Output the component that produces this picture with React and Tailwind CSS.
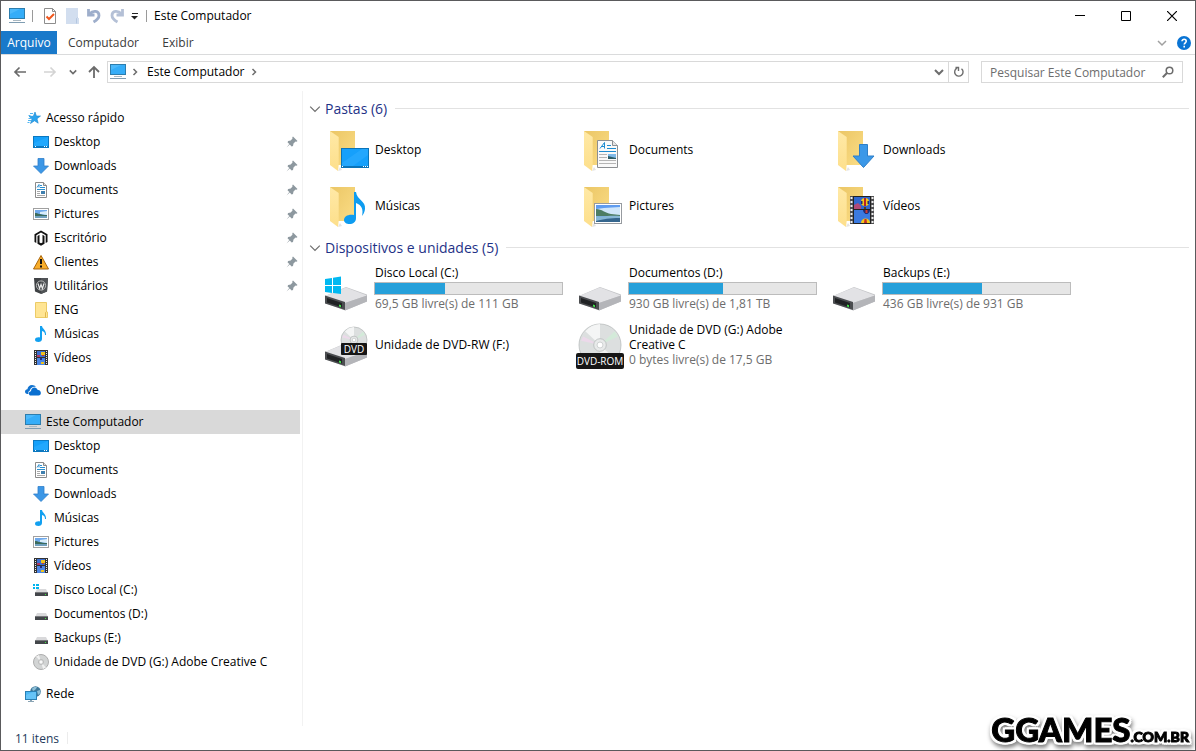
import React from 'react';

const MonitorIcon = () => (
    <svg width="16" height="16" viewBox="0 0 16 16" className="shrink-0">
        <rect x="0" y="0" width="16" height="11" fill="#2d7dad" />
        <rect x="1" y="1" width="14" height="9" fill="#4cb9fb" />
        <path d="M1 10V6L11 1h4v9z" fill="#35adf8" />
        <rect x="4" y="12" width="8" height="1" fill="#a9b8c2" />
        <rect x="0" y="14" width="16" height="1" fill="#7f9db2" />
    </svg>
);

const StarIcon = () => (
    <svg width="16" height="16" viewBox="0 0 16 16" className="shrink-0">
        <path d="M10 2l1.400 4H15.500l-3.500 2.800 1.200 4.400L9.500 10.800 5.500 13.500 7 9 4 6.300h4.300z" fill="#2ba4ee" stroke="#1c86cf" strokeWidth="0.6" />
        <path d="M5 3.500h3M3.500 5.500h2M3.500 8.500h3M3 10.500h3M2.500 12.500h2" stroke="#4fb4f1" strokeWidth="1" />
    </svg>
);

const DesktopIcon = () => (
    <svg width="16" height="16" viewBox="0 0 16 16" className="shrink-0">
        <rect x="0" y="2" width="16" height="12" fill="#0b78c0" />
        <rect x="1" y="3" width="14" height="9" fill="#14a0fa" />
        <path d="M1 12V9l14-6v9z" fill="#29adff" opacity="0.6" />
        <path d="M2 12.500h1M11 12.500h1M13 12.500h1" stroke="#fff" strokeWidth="1" />
    </svg>
);

const DownloadIcon = () => (
    <svg width="16" height="16" viewBox="0 0 16 16" className="shrink-0">
        <path d="M5 .5h6V8h4.500L8 15.500.5 8H5z" fill="#3c97e6" stroke="#2f7fca" strokeWidth="0.8" />
    </svg>
);

const DocumentIcon = () => (
    <svg width="16" height="16" viewBox="0 0 16 16" className="shrink-0">
        <path d="M2.500.5h8l3 3v12h-11z" fill="#fff" stroke="#8a8a8a" />
        <path d="M10.500.5v3h3" fill="#ddd" stroke="#8a8a8a" />
        <path d="M4 5.500L6 2.500v3M7 3.500h2M7 5.500h5M4 7.500h8" fill="none" stroke="#2b8fd0" />
        <path d="M4 9.500h3M4 11.500h3M4 13.500h8" stroke="#a8a8a8" />
        <rect x="8" y="9" width="4" height="3" fill="#3f7fae" />
    </svg>
);

const PictureIcon = () => (
    <svg width="16" height="16" viewBox="0 0 16 16" className="shrink-0">
        <rect x="0.5" y="2.500" width="15" height="11" fill="#fff" stroke="#a0a0a0" />
        <rect x="2" y="4" width="12" height="8" fill="#6fa9ec" />
        <path d="M7 6l7-1v4L7 8z" fill="#d8ecf9" />
        <path d="M2 7c3 0 5 2 12 2v1H2z" fill="#3b6b5c" />
        <path d="M2 10h12v2H2z" fill="#6e9fbd" />
    </svg>
);

const MagentoIcon = () => (
    <svg width="16" height="16" viewBox="0 0 16 16" className="shrink-0">
        <path d="M8 .5l6.500 3.700V12L12.700 13V5.300L8 2.600 3.300 5.300V13L1.500 12V4.200z" fill="#111" />
        <path d="M4.500 6l2-1.200v7.700L8 13.300l1.500-.8V4.800l2 1.200v7.800L8 15.800l-3.500-2z" fill="#111" />
    </svg>
);

const WarningIcon = () => (
    <svg width="16" height="16" viewBox="0 0 16 16" className="shrink-0">
        <path d="M8 1.500L15.500 15H.5z" fill="#f9ae2b" stroke="#a8650b" strokeLinejoin="round" />
        <path d="M7 5h2v5H7zM7 11.500h2v2H7z" fill="#111" />
    </svg>
);

const WordpressIcon = () => (
    <svg width="16" height="16" viewBox="0 0 16 16" className="shrink-0">
        <path d="M1 0h14l-1 13.500L8 16l-6-2.500z" fill="#3f4245" />
        <path d="M8 0h7l-1 13.500L8 16z" fill="#505356" />
        <circle cx="8" cy="7.500" r="4.600" fill="none" stroke="#cfcfcf" strokeWidth="0.800" />
        <path d="M5 5.500l1.600 5L8 6.500l1.400 4L11 5.500" fill="none" stroke="#eee" strokeWidth="1.100" />
    </svg>
);

const FolderIcon = () => (
    <svg width="16" height="16" viewBox="0 0 16 16" className="shrink-0">
        <path d="M2.500.5h11v9.500h1v5.500h-12z" fill="#ffe594" stroke="#eccb66" />
        <path d="M12.500 15.500V10.500l1-1" fill="none" stroke="#e2b94e" />
    </svg>
);

const MusicIcon = () => (
    <svg width="16" height="16" viewBox="0 0 16 16" className="shrink-0">
        <path d="M7 0h2c.3 3 4.500 4 4 9h-1c0-2.500-1-3.500-3-4v8c0 2-1.500 3-3.700 3C3.500 16 2 15 2 13.700 2 12 3.800 11.300 5.500 11.300c.6 0 1 0 1.500.2z" fill="#12a0f0" />
    </svg>
);

const VideoIcon = () => (
    <svg width="16" height="16" viewBox="0 0 16 16" className="shrink-0">
        <rect x="1" y="0" width="14" height="15" fill="#333" />
        <rect x="4" y="1" width="8" height="6" fill="#3c6fd0" />
        <rect x="4" y="8" width="8" height="7" fill="#4c86e4" />
        <path d="M2.500 1v14M13.500 1v14" stroke="#eee" strokeDasharray="1 1" />
        <rect x="8" y="2" width="4" height="3" fill="#efc21c" />
        <path d="M4 5h3v2H4z" fill="#b03a67" />
        <path d="M9 5h2v1H9zM9 12h2v1H9z" fill="#c8372d" />
        <rect x="7" y="8" width="2" height="2" fill="#262b7a" />
        <rect x="8" y="12" width="3" height="2" fill="#efc21c" />
    </svg>
);

const OneDriveIcon = () => (
    <svg width="16" height="16" viewBox="0 0 16 16" className="shrink-0">
        <path d="M2.500 12C.8 12 0 11 0 9.600 0 8.300 1 7.200 2.400 7.200 2.800 4.800 4.500 3 7 3c1.600 0 3 .7 3.900 1.900C7.500 4.300 5.200 6.300 5 8.500 3.600 8.800 3 10.500 3.500 12z" fill="#1173d0" />
        <path d="M6 13.500c-2.700 0-3-4 0-4.200C6 4.800 11.500 4 12.700 8 16.500 7.500 17 13.500 13.500 13.500z" fill="#0a6fd0" />
    </svg>
);

const SmallDriveIcon = ({ windows }) => (
    <svg width="16" height="16" viewBox="0 0 16 16" className="shrink-0">
        <path d="M4 7h9l2 4H2z" fill="#d9d9db" />
        <rect x="2" y="10" width="13" height="4" fill="#43464a" />
        <rect x="2" y="10" width="13" height="1" fill="#77797c" />
        <rect x="12" y="12" width="1" height="1" fill="#3dea3d" />
        {windows && <path d="M0 2h2v2H0zM3 2h3v2H3zM0 5h2v2H0zM3 5h3v2H3z" fill="#00b4ef" />}
    </svg>
);

const SmallDiscIcon = () => (
    <svg width="16" height="16" viewBox="0 0 16 16" className="shrink-0">
        <circle cx="8" cy="8" r="7.500" fill="#d2d4d4" stroke="#adadad" />
        <path d="M8 8L3 2.500 6 1zM8 8l5 5.500-3 1.500z" fill="#f1f1f1" />
        <circle cx="8" cy="8" r="2.500" fill="#e6e6e6" stroke="#aeb0b0" strokeWidth="0.800" />
        <circle cx="8" cy="8" r="1" fill="#fff" />
    </svg>
);

const NetworkIcon = () => (
    <svg width="16" height="16" viewBox="0 0 16 16" className="shrink-0">
        <circle cx="10.500" cy="5.500" r="5.300" fill="#3c7799" />
        <path d="M7 3c1-2 4-2.500 5-1.500L10 4 8 5zM12 5l3-1 .5 3-2.500 2z" fill="#8fc0d8" />
        <rect x="0.5" y="5.500" width="11" height="8" fill="#4bb8f5" stroke="#2980b4" />
        <path d="M1 13V9l7-3h3v7z" fill="#76cbfa" opacity="0.6" />
        <path d="M5 14h2v1H5zM3 15h6v1H3z" fill="#8aa4b4" />
    </svg>
);

const PinIcon = () => (
    <svg width="12" height="12" viewBox="0 0 12 12" className="shrink-0">
        <path d="M7 .5l4.500 4.500-1 .8-1-.2L7.500 7.500 7 10 5.600 10.500 3.800 8.500.5 11.500 3.300 8 1.500 6.200 2.200 5 4.700 4.500 6.500 2.500 6.300 1.300z" fill="#8d989f" />
    </svg>
);

const BigFolder = () => (
    <svg width="48" height="48" viewBox="0 0 48 48" className="shrink-0">
        <defs>
            <linearGradient id="folderBack" x1="0" y1="0" x2="1" y2="1">
                <stop offset="0" stopColor="#ebc665" />
                <stop offset="1" stopColor="#fbdd86" />
            </linearGradient>
            <linearGradient id="folderFlap" x1="0" y1="0" x2="0" y2="1">
                <stop offset="0" stopColor="#ffe9a6" />
                <stop offset="1" stopColor="#fddf8b" />
            </linearGradient>
        </defs>
        <path d="M8 5h25v34H8z" fill="url(#folderBack)" />
        <path d="M16 45l4-1-2-3z" fill="#e4e4e4" />
        <path d="M8 5l8.700 6v28l-.7 6-8-6z" fill="url(#folderFlap)" />
    </svg>
);

// artwork placed over the open folder
const overlays = {
    desktop: (
        <g>
            <rect x="19" y="22" width="28" height="20" fill="#0b74b9" />
            <rect x="20" y="23" width="26" height="17" fill="#16a0fb" />
            <path d="M20 40V37L40 23h6v6L31 40z" fill="#2fabff" opacity="0.6" />
            <path d="M20 40.500h1M41 40.500h1M43 40.500h1M45 40.500h1" stroke="#fff" />
        </g>
    ),
    documents: (
        <g>
            <path d="M21.500 14.500h15l5 5v22h-20z" fill="#f9f9f9" stroke="#8c8f92" />
            <path d="M36.500 14.500v5h5" fill="#e4e4e4" stroke="#8c8f92" />
            <path d="M24 22.500l4.500-6v6M25.500 20.500h3M31 19.500h4M31 22.500h9M23 25.500h17" fill="none" stroke="#1c8bd0" />
            <path d="M23 28.500h8M23 31.500h8M23 34.500h17M23 37.500h17" stroke="#b5b5b5" />
            <rect x="32" y="28" width="8" height="5" fill="#7fb9e8" />
            <path d="M32 30l8 2v1h-8z" fill="#2b5c66" />
        </g>
    ),
    downloads: (
        <path d="M29.500 18.500h8V30h6.500L33.500 41.500 23 30h6.500z" fill="#3b98e8" stroke="#2e7fc8" />
    ),
    music: (
        <path d="M32 10h2c1 8 10 9 9 17-.3 3-1.500 5-3 7 1.500-6 0-11-6-13v15c0 4-3 6-6.500 6-3 0-5.500-1.500-5.500-4 0-3.500 4-6 10-5z" fill="#0e9cf0" />
    ),
    pictures: (
        <g>
            <rect x="18.500" y="21.500" width="27" height="20" fill="#fff" stroke="#979ba0" />
            <rect x="20" y="23" width="24" height="17" fill="#5f9cf0" />
            <path d="M20 27l8-1 16-1v8H20z" fill="#cfe6fa" />
            <path d="M20 27c6 0 9 4 15 5l9 1v1H20z" fill="#4d7d64" />
            <path d="M20 34c8 1 14-1 24 0v6H20z" fill="#86b7d6" />
            <path d="M20 39c8-2 13-3 24-3v4H20z" fill="#35668e" />
        </g>
    ),
    videos: (
        <g>
            <rect x="20" y="14" width="24" height="28" fill="#4e4e50" />
            <path d="M21.500 15v26M42.500 15v26" stroke="#eee" strokeWidth="2" strokeDasharray="2 2" />
            <rect x="23" y="14" width="18" height="28" fill="#222" />
            <rect x="24" y="15" width="16" height="12" fill="#3067ce" />
            <rect x="24" y="28" width="16" height="13" fill="#3b7ae0" />
            <path d="M24 23l4-2 3 3v3h-7z" fill="#b04a78" />
            <circle cx="35" cy="20" r="4" fill="#f4c817" />
            <path d="M34 16h2v8h-2z" fill="#b4232a" />
            <path d="M31 19h1.500v3H31zM37.500 19H39v3h-1.500z" fill="#222b70" />
            <path d="M34 25h2v2h-2z" fill="#5a3a1a" />
            <path d="M33 28h7c0 2-1.500 3-2.500 4h-2c-1-1-2.500-2-2.500-4z" fill="#222b70" />
            <path d="M35.500 28h2v3h-2z" fill="#d13b2f" />
            <path d="M31 41c0-6 9-6 9 0z" fill="#f4c817" />
            <path d="M34.500 37h2l.5 4h-3z" fill="#c43028" />
        </g>
    ),
};

const DriveShape = () => (
    <g>
        <path d="M3 34v-3L24 22l21 7.500v7L23 45.500 3 38z" fill="#c4c5c8" />
        <path d="M3 31l21-8.500 21 8L23 38z" fill="#e2e2e5" />
        <path d="M23 38l22-7.500v6L23 45.500z" fill="#b4b5b9" />
        <path d="M3 30.500L23 37v8L3 38.500z" fill="#4b4d50" />
        <path d="M5 33l15 5v4.500L5 37.500z" fill="#202224" />
        <path d="M17 39.500l2 .7v2l-2-.7z" fill="#41e64a" />
    </g>
);

const Disc = ({ cx, cy, r }) => (
    <g>
        <circle cx={cx} cy={cy} r={r} fill="#dcdfdf" stroke="#b9bcbc" strokeWidth="0.800" />
        <path d={`M${cx} ${cy}L${cx - r * 0.7} ${cy - r * 0.65}A${r} ${r} 0 0 1 ${cx} ${cy - r}z`} fill="#f4f5f5" />
        <path d={`M${cx} ${cy}L${cx + r * 0.7} ${cy + r * 0.65}A${r} ${r} 0 0 1 ${cx} ${cy + r}z`} fill="#f1f2f2" />
        <path d={`M${cx} ${cy}L${cx - r * 0.9} ${cy - r * 0.2}L${cx - r * 0.8} ${cy - r * 0.4}z`} fill="#ecd9ea" />
        <path d={`M${cx} ${cy}L${cx + r * 0.7} ${cy - r * 0.65}L${cx + r * 0.85} ${cy - r * 0.4}z`} fill="#d3ead9" />
        <circle cx={cx} cy={cy} r={r * 0.3} fill="#e8eaea" stroke="#b6baba" strokeWidth="0.800" />
        <circle cx={cx} cy={cy} r={r * 0.14} fill="#fff" stroke="#b6baba" strokeWidth="0.600" />
    </g>
);

const driveArt = {
    system: (
        <g>
            <DriveShape />
            <path d="M3 14l7-1v7H3zM11 12.800l8-1.300V20h-8zM3 21h7v7l-7-1zM11 21h8v8l-8-1z" fill="#00b8f1" />
        </g>
    ),
    disk: <DriveShape />,
    dvdrw: (
        <g>
            <DriveShape />
            <Disc cx={32} cy={19} r={13} />
            <rect x="19" y="22" width="26" height="12" rx="1" fill="#161616" />
            <text x="32" y="32" textAnchor="middle" fontSize="10" fill="#fff">DVD</text>
        </g>
    ),
    dvdrom: (
        <g>
            <Disc cx={24} cy={24} r={21} />
            <rect x="0" y="32" width="48" height="16" rx="2" fill="#161616" />
            <text x="24" y="44" textAnchor="middle" fontSize="10" fill="#fff">DVD-ROM</text>
        </g>
    ),
};

const quickAccess = [
    { name: 'Desktop', icon: DesktopIcon, pinned: true },
    { name: 'Downloads', icon: DownloadIcon, pinned: true },
    { name: 'Documents', icon: DocumentIcon, pinned: true },
    { name: 'Pictures', icon: PictureIcon, pinned: true },
    { name: 'Escritório', icon: MagentoIcon, pinned: true },
    { name: 'Clientes', icon: WarningIcon, pinned: true },
    { name: 'Utilitários', icon: WordpressIcon, pinned: true },
    { name: 'ENG', icon: FolderIcon },
    { name: 'Músicas', icon: MusicIcon },
    { name: 'Vídeos', icon: VideoIcon },
];

const computer = [
    { name: 'Desktop', icon: DesktopIcon },
    { name: 'Documents', icon: DocumentIcon },
    { name: 'Downloads', icon: DownloadIcon },
    { name: 'Músicas', icon: MusicIcon },
    { name: 'Pictures', icon: PictureIcon },
    { name: 'Vídeos', icon: VideoIcon },
    { name: 'Disco Local (C:)', icon: () => <SmallDriveIcon windows /> },
    { name: 'Documentos (D:)', icon: SmallDriveIcon },
    { name: 'Backups (E:)', icon: SmallDriveIcon },
    { name: 'Unidade de DVD (G:) Adobe Creative C', icon: SmallDiscIcon },
];

const folders = [
    { name: 'Desktop', art: 'desktop' },
    { name: 'Documents', art: 'documents' },
    { name: 'Downloads', art: 'downloads' },
    { name: 'Músicas', art: 'music' },
    { name: 'Pictures', art: 'pictures' },
    { name: 'Vídeos', art: 'videos' },
];

const drives = [
    { name: 'Disco Local (C:)', art: 'system', used: 37.5, info: '69,5 GB livre(s) de 111 GB' },
    { name: 'Documentos (D:)', art: 'disk', used: 50, info: '930 GB livre(s) de 1,81 TB' },
    { name: 'Backups (E:)', art: 'disk', used: 53, info: '436 GB livre(s) de 931 GB' },
    { name: 'Unidade de DVD-RW (F:)', art: 'dvdrw' },
    { name: 'Unidade de DVD (G:) Adobe Creative C', art: 'dvdrom', info: '0 bytes livre(s) de 17,5 GB' },
];

const Chevron = ({ dir, size = 10, className = 'text-[#6d6d6d]', width = 1.5 }) => (
    <svg width={size} height={size} viewBox="0 0 10 10" className={`shrink-0 ${className}`}>
        <path d={dir === 'right' ? 'M3.500 2l3 3-3 3' : 'M1 3l4 4 4-4'} fill="none" stroke="currentColor" strokeWidth={width} />
    </svg>
);

const NavItem = ({ item, root, selected }) => {
    const Icon = item.icon;
    return (
        <a href="#" className={`flex h-6 items-center gap-[5px] pr-0.5 ${root ? 'pl-6' : 'pl-8'} ${selected ? 'bg-[#d9d9d9]' : ''}`}>
            <Icon />
            <span className="grow whitespace-nowrap pb-px">{item.name}</span>
            {item.pinned && <PinIcon />}
        </a>
    );
};

const GroupHeader = ({ title }) => (
    <div className="flex h-[27px] items-center gap-1 px-1.5">
        <button aria-label={`Recolher ${title}`}><Chevron dir="down" size={12} width={1} /></button>
        <h2 className="whitespace-nowrap text-[14px] text-[#1e3287]">{title}</h2>
        <div className="ml-1 h-px grow bg-[#e2e2e2]"></div>
    </div>
);

const TitleBar = () => (
    <header className="flex h-[30px] items-center pl-2">
        <MonitorIcon />
        <div className="ml-[7px] h-3 w-px bg-[#9a9a9a]"></div>
        <button className="ml-2.5" aria-label="Propriedades">
            <svg width="16" height="16" viewBox="0 0 16 16">
                <path d="M1.500.5h8l3 3v12h-11z" fill="#fff" stroke="#8d8d8d" />
                <path d="M9.500.5v3h3" fill="none" stroke="#8d8d8d" />
                <path d="M3.500 8.500L6 11l5-5" fill="none" stroke="#f0571e" strokeWidth="2" />
            </svg>
        </button>
        <button className="ml-1.5" aria-label="Nova pasta">
            <svg width="16" height="16" viewBox="0 0 16 16">
                <path d="M1 0h12v10h1v6H1z" fill="#d2deef" />
                <path d="M11.500 15.500v-5l1-1" fill="none" stroke="#b4c7e0" />
            </svg>
        </button>
        <button className="ml-1.5" aria-label="Desfazer">
            <svg width="16" height="16" viewBox="0 0 16 16">
                <path d="M1.500 1v6h6M2.500 6C6 2 12 2.500 12 7.500c0 3-2 4.500-5.500 6.500" fill="none" stroke="#9eaecb" strokeWidth="2.800" />
            </svg>
        </button>
        <button className="ml-1.5" aria-label="Refazer">
            <svg width="16" height="16" viewBox="0 0 16 16">
                <path d="M13.500 1v6h-6M12.500 6C9 2 3 2.500 3 7.500c0 3 2 4.500 5.500 6.500" fill="none" stroke="#b4c0d6" strokeWidth="2.800" />
            </svg>
        </button>
        <button className="ml-1.5" aria-label="Personalizar barra">
            <svg width="8" height="8" viewBox="0 0 8 8">
                <path d="M1 1.500h6" stroke="#222" />
                <path d="M0 4h7L3.500 7.500z" fill="#222" />
            </svg>
        </button>
        <div className="ml-[7px] h-3 w-px bg-[#9a9a9a]"></div>
        <h1 className="ml-[7px] grow pb-px">Este Computador</h1>
        <button className="flex h-full w-[46px] items-center justify-center" aria-label="Minimizar">
            <svg width="10" height="10" viewBox="0 0 10 10"><path d="M0 4.500h10" stroke="#000" /></svg>
        </button>
        <button className="flex h-full w-[46px] items-center justify-center" aria-label="Maximizar">
            <svg width="10" height="10" viewBox="0 0 10 10"><path d="M.5.5h9v9h-9z" fill="none" stroke="#000" /></svg>
        </button>
        <button className="flex h-full w-[46px] items-center justify-center" aria-label="Fechar">
            <svg width="10" height="10" viewBox="0 0 10 10"><path d="M0 0l10 10M10 0L0 10" stroke="#000" strokeWidth="1.200" /></svg>
        </button>
    </header>
);

const Ribbon = () => (
    <nav className="flex h-6 items-center border-b border-[#dadbdc] pr-1 text-[#3b3b3b]">
        <button className="h-full w-14 bg-[#1979ca] text-white">Arquivo</button>
        <button className="h-full w-[93px]">Computador</button>
        <button className="h-full w-14">Exibir</button>
        <button className="ml-auto mr-2.5" aria-label="Minimizar faixa"><Chevron dir="down" className="text-[#a0a0a0]" /></button>
        <button aria-label="Ajuda">
            <svg width="14" height="14" viewBox="0 0 14 14">
                <circle cx="7" cy="7" r="7" fill="#0a74d4" />
                <path d="M5 5.200C5 2.600 9.200 2.800 9.200 5.200 9.200 6.800 7.200 6.800 7.200 8.600M7.200 9.800v1.600" fill="none" stroke="#fff" strokeWidth="1.600" />
            </svg>
        </button>
    </nav>
);

const AddressBar = () => (
    <div className="flex h-[34px] items-center pl-3 pr-3">
        <button aria-label="Voltar">
            <svg width="14" height="14" viewBox="0 0 14 14"><path d="M13 7H2M6.500 2.500L2 7l4.500 4.500" fill="none" stroke="#6b6b6b" strokeWidth="1.700" /></svg>
        </button>
        <button className="ml-4" aria-label="Avançar">
            <svg width="14" height="14" viewBox="0 0 14 14"><path d="M1 7h11M7.500 2.500L12 7l-4.500 4.500" fill="none" stroke="#d4d4d4" strokeWidth="1.700" /></svg>
        </button>
        <button className="ml-3" aria-label="Locais recentes"><Chevron dir="down" size={8} width={2} /></button>
        <button className="ml-2.5" aria-label="Acima">
            <svg width="14" height="14" viewBox="0 0 14 14"><path d="M7 13V2M2 7l5-5 5 5" fill="none" stroke="#6b6b6b" strokeWidth="1.800" /></svg>
        </button>
        <div className="ml-1.5 flex h-[22px] grow items-center border border-[#d9d9d9] pl-0.5">
            <MonitorIcon />
            <span className="ml-1"><Chevron dir="right" /></span>
            <a href="#" className="ml-[7px] pb-0.5">Este Computador</a>
            <span className="ml-1"><Chevron dir="right" /></span>
            <button className="ml-auto mr-1" aria-label="Locais anteriores"><Chevron dir="down" width={2} /></button>
            <button className="flex h-full w-5 items-center justify-center border-l border-[#d9d9d9]" aria-label="Atualizar">
                <svg width="12" height="12" viewBox="0 0 12 12">
                    <path d="M4 2.200A4.200 4.200 0 1 0 8.500 2.700M2.500 1.500H5.500V5" fill="none" stroke="#6d6d6d" strokeWidth="1.400" />
                </svg>
            </button>
        </div>
        <label className="ml-3 flex h-[22px] w-[202px] items-center border border-[#d9d9d9] pl-2 pr-2">
            <input type="text" aria-label="Pesquisar" placeholder="Pesquisar Este Computador" className="min-w-0 grow outline-none placeholder:text-[#6d6d6d]" />
            <svg width="12" height="12" viewBox="0 0 12 12" className="shrink-0">
                <circle cx="7.500" cy="4.500" r="3.300" fill="none" stroke="#6d6d6d" strokeWidth="1.500" />
                <path d="M5.200 6.800L.8 11.200" stroke="#6d6d6d" strokeWidth="2" />
            </svg>
        </label>
    </div>
);

const App = () => {
    return (
        <div className="relative flex min-h-screen flex-col border border-[#5a5a5c] bg-white font-['Open_Sans','Noto_Sans',sans-serif] text-[12px] leading-[15px] text-black">
            <TitleBar />
            <Ribbon />
            <AddressBar />

            <div className="flex grow pt-[2px]">
                <aside className="w-[302px] shrink-0 border-r border-[#f2f2f2] pb-5 pr-0.5 pt-[15px]">
                    <NavItem root item={{ name: 'Acesso rápido', icon: StarIcon }} />
                    {quickAccess.map(item => <NavItem key={item.name} item={item} />)}
                    <div className="py-2">
                        <NavItem root item={{ name: 'OneDrive', icon: OneDriveIcon }} />
                    </div>
                    <NavItem root selected item={{ name: 'Este Computador', icon: MonitorIcon }} />
                    {computer.map(item => <NavItem key={item.name} item={item} />)}
                    <div className="pt-2">
                        <NavItem root item={{ name: 'Rede', icon: NetworkIcon }} />
                    </div>
                </aside>

                <main className="grow pt-1">
                    <section>
                        <GroupHeader title="Pastas (6)" />
                        <div className="grid grid-cols-[repeat(auto-fill,254px)] pl-[19px]">
                            {folders.map(folder => (
                                <a key={folder.name} href="#" className="flex h-14 items-center gap-[5px]">
                                    <span className="relative">
                                        <BigFolder />
                                        <svg width="48" height="48" viewBox="0 0 48 48" className="absolute inset-0">
                                            {overlays[folder.art]}
                                        </svg>
                                    </span>
                                    <span className="pb-px">{folder.name}</span>
                                </a>
                            ))}
                        </div>
                    </section>
                    <section>
                        <GroupHeader title="Dispositivos e unidades (5)" />
                        <div className="grid grid-cols-[repeat(auto-fill,254px)] pl-[19px]">
                            {drives.map(drive => (
                                <a key={drive.name} href="#" className="flex h-14 items-center gap-1">
                                    <svg width="48" height="48" viewBox="0 0 48 48" className="shrink-0">
                                        {driveArt[drive.art]}
                                    </svg>
                                    <div className="w-[189px] pb-0.5">
                                        <div className="pl-px pr-4">{drive.name}</div>
                                        {drive.used && (
                                            <div role="progressbar" aria-label={drive.name} aria-valuenow={drive.used} className="mb-px mt-0.5 h-[13px] border border-[#bcbcbc] bg-[#e6e6e6]">
                                                <div className="h-full bg-[#26a0da]" style={{ width: `${drive.used}%` }}></div>
                                            </div>
                                        )}
                                        {drive.info && <div className="pl-px text-[#6d6d6d]">{drive.info}</div>}
                                    </div>
                                </a>
                            ))}
                        </div>
                    </section>
                </main>
            </div>

            <footer className="flex h-6 items-center pl-3.5 text-[#1e395b]">
                <span>11 itens</span>
                <div className="ml-2 h-3 w-px bg-[#ececec]"></div>
            </footer>

            <div className="absolute bottom-1 right-1.5 flex items-baseline font-['Lato',sans-serif] font-black leading-none text-black [-webkit-text-stroke:1px_black] [filter:drop-shadow(2px_0_0_white)_drop-shadow(-2px_0_0_white)_drop-shadow(0_2px_0_white)_drop-shadow(0_-2px_0_white)_drop-shadow(1px_3px_2px_rgba(0,0,0,0.5))]">
                <span className="text-[33px]">GGAMES</span>
                <span className="text-[14px]">.COM.BR</span>
            </div>
        </div>
    );
}

export default App
